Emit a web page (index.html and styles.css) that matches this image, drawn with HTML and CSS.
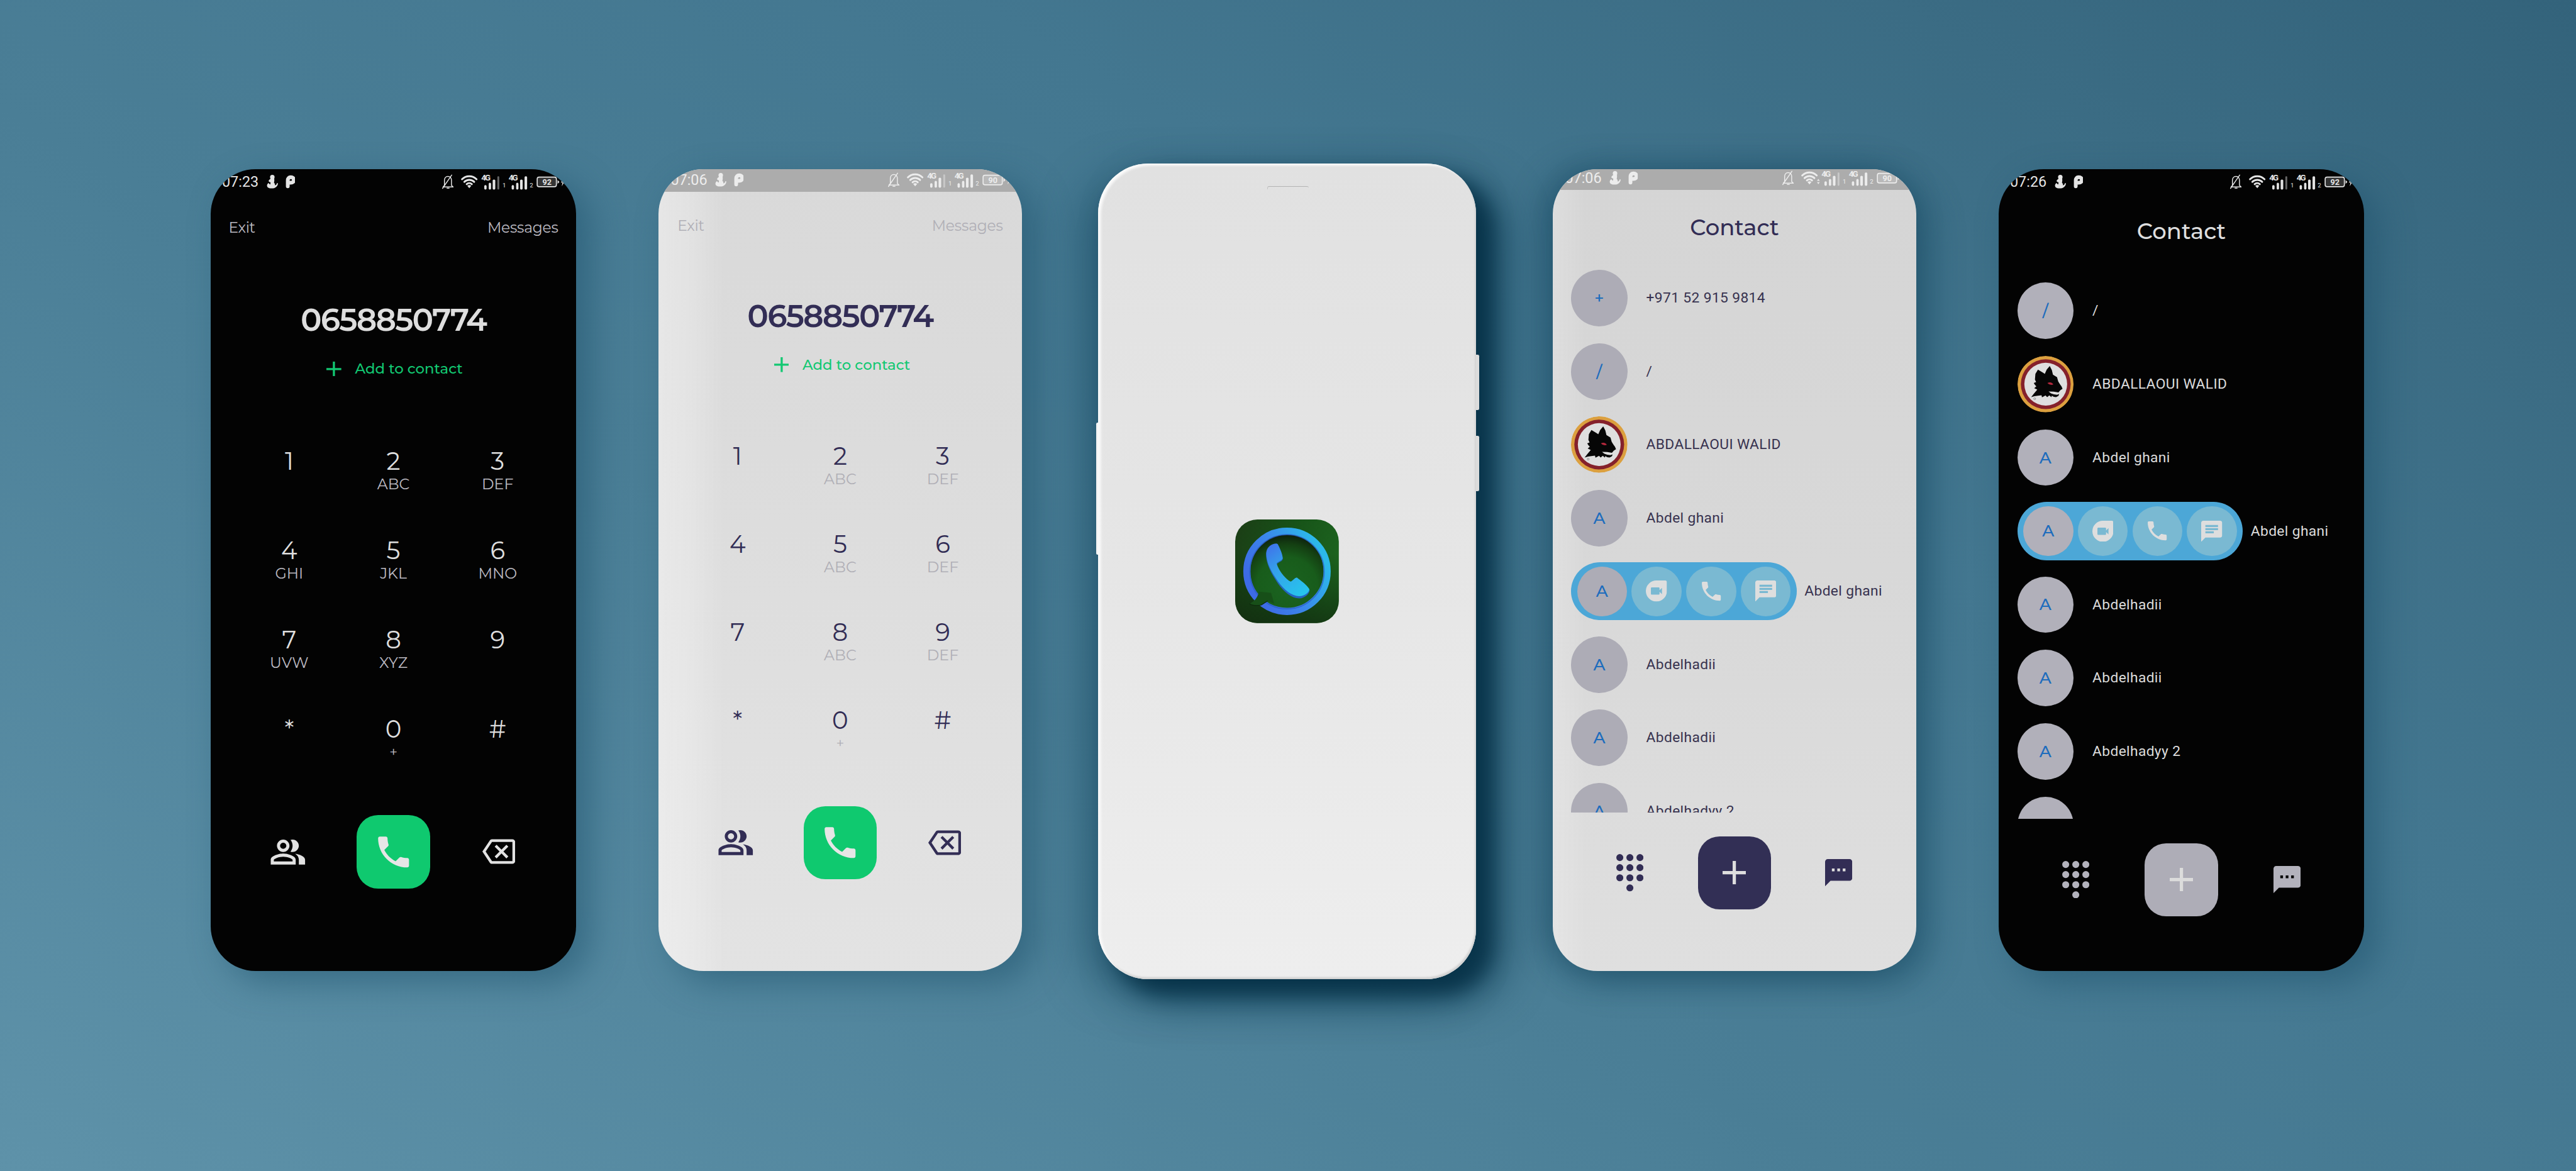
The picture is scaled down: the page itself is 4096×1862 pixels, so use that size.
FILE: index.html
```html
<!DOCTYPE html>
<html lang="en">
<head>
<meta charset="utf-8">
<title>Dialer app – screens</title>
<link rel="stylesheet" href="styles.css">
</head>
<body>
<svg class="defs" aria-hidden="true">
  <symbol id="notif" viewBox="0 0 70 56">
    <circle cx="21.500" cy="17" r="4.800" fill="currentColor"/>
    <path d="M18 20l7.500 0c.5 3 .5 6-.5 8.500 1.500 1.500 2.500 3.500 2.200 6 2.300-.5 4-2.500 4.300-5l2 .8c-.3 5-3.500 9-8.500 10.200-5 1-11 .5-13.500-2-2.500-3-1-7.500 2-9l3 3.500c1-1.500 1.500-3 1-5-3 0-4.500-2-3.500-4 1.200-2 2.500-2.500 4-4z" fill="currentColor"/>
    <path d="M56 37V24.500c0-4.500 2.500-7 6.500-7s6.500 2.300 6.500 6-2.500 6-6.500 6H58" transform="translate(-1.500 -.5)" fill="none" stroke="currentColor" stroke-width="8" stroke-linecap="round"/>
  </symbol>
  <symbol id="signals" viewBox="0 0 290 56">
    <g fill="none" stroke="currentColor" stroke-linecap="round" stroke-linejoin="round">
      <path d="M9 34.500V24c0-5 3-8.500 7.500-8.500S24 19 24 24v10.500l3.500 3.500H6l3-3.500M14.500 40.500h4.500M24.500 12.500 5 41" stroke-width="2"/>
      <path d="M46.500 21.500a22 22 0 0 1 31 0M51.500 27a15 15 0 0 1 21 0M56.500 32a8 8 0 0 1 11 0" stroke-width="4"/>
    </g>
    <path d="M57.800 35.500a6 6 0 0 1 8.400 0L62 40.500z" fill="currentColor"/>
    <g id="cell" fill="currentColor">
      <rect x="94" y="34" width="5" height="9.500" rx="2.500"/>
      <rect x="103.500" y="29" width="5" height="14.500" rx="2.500"/>
      <rect x="112" y="22" width="5.500" height="21.500" rx="2.500"/>
    </g>
    <rect x="122" y="15" width="4" height="28.500" rx="2" fill="currentColor" opacity=".45"/>
    <use href="#cell" x="58.500"/>
    <rect x="180" y="15" width="5.500" height="28.500" rx="2.500" fill="currentColor"/>
    <rect x="207" y="17" width="41" height="20.500" rx="4" fill="currentColor" fill-opacity=".22" stroke="currentColor" stroke-width="2.200"/>
    <path d="M250.500 23l4 4.200-4 4.200zM263 19l-5.500 9.500h3.500l-1.500 8 6-10h-3.500z" fill="currentColor"/>
  </symbol>
  <symbol id="people" viewBox="0 0 24 24">
    <path fill="currentColor" d="M16.670 13.130C18.040 14.060 19 15.320 19 17v3h4v-3c0-2.180-3.570-3.470-6.330-3.870zM15 12c2.210 0 4-1.790 4-4s-1.790-4-4-4c-.47 0-.91.1-1.330.24C14.500 5.270 15 6.580 15 8s-.5 2.730-1.330 3.760c.42.14.86.24 1.330.24zM9 12c2.210 0 4-1.790 4-4s-1.790-4-4-4-4 1.790-4 4 1.790 4 4 4zm0-6c1.100 0 2 .9 2 2s-.9 2-2 2-2-.9-2-2 .9-2 2-2zM9 13c-2.670 0-8 1.340-8 4v3h16v-3c0-2.660-5.330-4-8-4zm6 5H3v-.99C3.200 16.290 6.300 15 9 15s5.800 1.290 6 2v1z"/>
  </symbol>
  <symbol id="phone" viewBox="0 0 24 24">
    <path fill="currentColor" d="M6.620 10.790c1.440 2.830 3.760 5.140 6.590 6.590l2.200-2.200c.27-.27.67-.36 1.020-.24 1.120.37 2.330.57 3.570.57.55 0 1 .45 1 1V20c0 .55-.45 1-1 1-9.390 0-17-7.610-17-17 0-.55.45-1 1-1h3.500c.55 0 1 .45 1 1 0 1.250.2 2.450.57 3.570.11.35.03.74-.25 1.020l-2.200 2.200z"/>
  </symbol>
  <symbol id="backspace" viewBox="0 0 24 24">
    <path fill="currentColor" d="M22 3H7c-.69 0-1.230.35-1.590.88L0 12l5.410 8.110c.36.53.9.89 1.590.89h15c1.100 0 2-.9 2-2V5c0-1.100-.9-2-2-2zm0 16H7.070L2.400 12l4.660-7H22v14zm-11.590-2L14 13.410 17.590 17 19 15.590 15.410 12 19 8.410 17.590 7 14 10.590 10.410 7 9 8.410 12.590 12 9 15.590z"/>
  </symbol>
  <symbol id="dialpad" viewBox="0 0 58 80">
    <g fill="currentColor"><circle cx="7.500" cy="7.500" r="7.500"/><circle cx="29" cy="7.500" r="7.500"/><circle cx="50.500" cy="7.500" r="7.500"/><circle cx="7.500" cy="29" r="7.500"/><circle cx="29" cy="29" r="7.500"/><circle cx="50.500" cy="29" r="7.500"/><circle cx="7.500" cy="50.700" r="7.500"/><circle cx="29" cy="50.700" r="7.500"/><circle cx="50.500" cy="50.700" r="7.500"/><circle cx="29" cy="72.300" r="7.500"/></g>
  </symbol>
  <symbol id="sms" viewBox="2 2 20 20">
    <path fill="currentColor" d="M20 2H4c-1.100 0-2 .9-2 2v18l4-4h14c1.100 0 2-.9 2-2V4c0-1.100-.9-2-2-2zM9 11H7V9h2v2zm4 0h-2V9h2v2zm4 0h-2V9h2v2z"/>
  </symbol>
  <symbol id="chat" viewBox="2 2 20 20">
    <path fill="currentColor" d="M20 2H4c-1.100 0-1.990.9-1.990 2L2 22l4-4h14c1.100 0 2-.9 2-2V4c0-1.100-.9-2-2-2zM6 9h12v2H6V9zm8 5H6v-2h8v2zm4-6H6V6h12v2z"/>
  </symbol>
  <symbol id="duo" viewBox="2 2 20 20">
    <path fill="currentColor" fill-rule="evenodd" d="M12 2h8.500c.8 0 1.500.7 1.500 1.500V12a10 10 0 1 1-10-10zM7.600 8.500c-.4 0-.8.4-.8.800v5.400c0 .4.400.8.800.8h6.600c.4 0 .8-.4.800-.8v-1.900l2.300 2.200V9l-2.300 2.200V9.300c0-.4-.4-.8-.8-.8z"/>
  </symbol>
  <symbol id="plus" viewBox="0 0 50 50">
    <path d="M25 0v50M0 25h50" fill="none" stroke="currentColor" stroke-width="7"/>
  </symbol>
  <symbol id="wolf" viewBox="0 0 120 120">
    <circle cx="60" cy="60" r="60" fill="#dca03f"/>
    <circle cx="60" cy="60" r="53" fill="#85212b"/>
    <circle cx="60" cy="60" r="45.500" fill="#dfdfdf"/>
    <path fill="#060606" d="M43.400 29 54 35.500 58 38 62 29 68.500 21.400 73 30 75.300 39.700 84 45 86.500 54 90 60 93.600 65 95.700 70 91 73 87 77.500 77 76 66 75.500 71 79.500 77 81.500 84 82.500 88.500 81 87 85 82 87.500 77 87 73 84.500 72 87.500 67.500 84 63 87.500 59.500 84 56 86 52 88 51 83.500 43 84.500 36 85.500 29 87.500 35 80 42 71.500 35.500 68.500 40 64.500 37 61.500 34.500 57.600 39.500 55.500 37 50 38 38z"/>
    <path fill="#b4283c" d="M63.500 57.500q7-3.500 11.500 1.500l1 2q-8 2-12.500-3.500z"/>
    <circle cx="36.500" cy="91" r="2" fill="none" stroke="#777" stroke-width="1"/>
  </symbol>
</svg>

<main class="stage">

  <section class="phone dark dialer wide">
    <div class="status">
      <span class="time">07:23</span>
      <svg class="notif"><use href="#notif"/></svg>
      <svg class="signals" viewBox="0 0 290 56"><use href="#signals"/><text class="net" x="87.500" y="24" textLength="20">4G</text><text class="net" x="146" y="24" textLength="20">4G</text><text class="sim" x="133" y="39.500">1</text><text class="sim" x="191" y="39.500">2</text><text class="level" x="228" y="33">92</text></svg>
    </div>
    <header class="topbar"><span>Exit</span><span>Messages</span></header>
    <div class="number">0658850774</div>
    <div class="add"><svg><use href="#plus"/></svg><span>Add to contact</span></div>
    <div class="keypad">
      <div class="key"><b>1</b></div><div class="key"><b>2</b><i>ABC</i></div><div class="key"><b>3</b><i>DEF</i></div>
      <div class="key"><b>4</b><i>GHI</i></div><div class="key"><b>5</b><i>JKL</i></div><div class="key"><b>6</b><i>MNO</i></div>
      <div class="key"><b>7</b><i>UVW</i></div><div class="key"><b>8</b><i>XYZ</i></div><div class="key"><b>9</b></div>
      <div class="key"><b class="star">*</b></div><div class="key"><b>0</b><i class="op">+</i></div><div class="key"><b>#</b></div>
    </div>
    <nav class="actions">
      <span class="slot"><svg class="i-people"><use href="#people"/></svg></span>
      <span class="main call"><svg class="i-phone"><use href="#phone"/></svg></span>
      <span class="slot"><svg class="i-back"><use href="#backspace"/></svg></span>
    </nav>
  </section>

  <section class="phone light dialer">
    <div class="status">
      <span class="time">07:06</span>
      <svg class="notif"><use href="#notif"/></svg>
      <svg class="signals" viewBox="0 0 290 56"><use href="#signals"/><text class="net" x="87.500" y="24" textLength="20">4G</text><text class="net" x="146" y="24" textLength="20">4G</text><text class="sim" x="133" y="39.500">1</text><text class="sim" x="191" y="39.500">2</text><text class="level" x="228" y="33">90</text></svg>
    </div>
    <header class="topbar"><span>Exit</span><span>Messages</span></header>
    <div class="number">0658850774</div>
    <div class="add"><svg><use href="#plus"/></svg><span>Add to contact</span></div>
    <div class="keypad">
      <div class="key"><b>1</b></div><div class="key"><b>2</b><i>ABC</i></div><div class="key"><b>3</b><i>DEF</i></div>
      <div class="key"><b>4</b></div><div class="key"><b>5</b><i>ABC</i></div><div class="key"><b>6</b><i>DEF</i></div>
      <div class="key"><b>7</b></div><div class="key"><b>8</b><i>ABC</i></div><div class="key"><b>9</b><i>DEF</i></div>
      <div class="key"><b class="star">*</b></div><div class="key"><b>0</b><i class="op">+</i></div><div class="key"><b>#</b></div>
    </div>
    <nav class="actions">
      <span class="slot"><svg class="i-people"><use href="#people"/></svg></span>
      <span class="main call"><svg class="i-phone"><use href="#phone"/></svg></span>
      <span class="slot"><svg class="i-back"><use href="#backspace"/></svg></span>
    </nav>
  </section>

  <section class="splash">
    <span class="side left"></span><span class="side r1"></span><span class="side r2"></span><span class="side r3"></span>
    <div class="glass">
      <span class="speaker"></span>
      <svg class="appicon" viewBox="0 0 664 664">
        <defs>
          <linearGradient id="tile" x1="0" y1=".2" x2="1" y2=".5"><stop offset="0" stop-color="#1b3f16"/><stop offset=".5" stop-color="#175318"/><stop offset="1" stop-color="#1d641f"/></linearGradient>
          <linearGradient id="tileshade" x1=".5" y1=".3" x2=".45" y2="1"><stop offset="0" stop-color="#0b2a0c" stop-opacity="0"/><stop offset="1" stop-color="#12280f" stop-opacity=".75"/></linearGradient>
          <linearGradient id="ring" x1=".1" y1=".75" x2=".95" y2=".3"><stop offset="0" stop-color="#3d6be6"/><stop offset=".45" stop-color="#3b86ea"/><stop offset="1" stop-color="#2cb9ea"/></linearGradient>
          <radialGradient id="disc" cx=".5" cy=".72" r=".76"><stop offset="0" stop-color="#1b6320"/><stop offset=".55" stop-color="#185c1b"/><stop offset=".78" stop-color="#143f12"/><stop offset="1" stop-color="#0b140b"/></radialGradient>
          <linearGradient id="handset" x1=".1" y1="0" x2=".75" y2="1"><stop offset="0" stop-color="#3f72ea"/><stop offset=".4" stop-color="#35a0ea"/><stop offset="1" stop-color="#27c4ec"/></linearGradient>
        </defs>
        <rect width="664" height="664" rx="142" fill="url(#tile)"/>
        <rect width="664" height="664" rx="142" fill="url(#tileshade)"/>
        <circle cx="332" cy="332" r="236" fill="url(#disc)"/>
        <circle cx="332" cy="332" r="257" fill="none" stroke="url(#ring)" stroke-width="46"/>
        <circle cx="332" cy="335" r="238" fill="none" stroke="#2b58c4" stroke-width="7" opacity=".7"/>
        <path d="M152 462C146 495 128 522 92 540 110 552 140 553 168 548L208 522 250 540 230 470z" fill="#174f18"/>
        <path d="M92 540C110 552 140 553 168 548L208 522" fill="none" stroke="#0e2a0d" stroke-width="5"/>
        <g transform="translate(-110 -84)">
          <path d="M375 246C345 246 310 268 308 308c0 60 32 120 72 180 40 60 90 100 140 102 40-2 68-34 67-54-17-25-57-55-82-74-15 2-25 22-40 26-35-17-80-77-89-117 9-13 32-15 39-32-3-33-20-68-32-91z" fill="#2564c0"/>
          <path d="M375 238C345 238 310 260 309 300c0 60 32 118 72 176 40 58 90 98 139 100 40-2 66-28 65-46-15-25-55-55-80-74-15 2-25 22-40 26-35-17-80-77-89-117 9-13 32-15 39-32-3-33-20-68-32-91z" fill="url(#handset)"/>
        </g>
      </svg>
    </div>
  </section>

  <section class="phone light contacts">
    <div class="status">
      <span class="time">07:06</span>
      <svg class="notif"><use href="#notif"/></svg>
      <svg class="signals" viewBox="0 0 290 56"><use href="#signals"/><path d="M78 33l3-4 3 4zM78 36l3 4 3-4z" fill="currentColor"/><text class="net" x="87.500" y="24" textLength="20">4G</text><text class="net" x="146" y="24" textLength="20">4G</text><text class="sim" x="133" y="39.500">1</text><text class="sim" x="191" y="39.500">2</text><text class="level" x="228" y="33">90</text></svg>
    </div>
    <h1 class="title">Contact</h1>
    <div class="list">
      <div class="row"><span class="avatar">+</span><span class="name">+971 52 915 9814</span></div>
      <div class="row"><span class="avatar">/</span><span class="name">/</span></div>
      <div class="row"><svg class="avatar"><use href="#wolf"/></svg><span class="name">ABDALLAOUI WALID</span></div>
      <div class="row"><span class="avatar">A</span><span class="name">Abdel ghani</span></div>
      <div class="row open"><div class="pill"><span class="avatar">A</span><span class="act"><svg><use href="#duo"/></svg></span><span class="act"><svg class="tel"><use href="#phone"/></svg></span><span class="act"><svg><use href="#chat"/></svg></span></div><span class="name">Abdel ghani</span></div>
      <div class="row"><span class="avatar">A</span><span class="name">Abdelhadii</span></div>
      <div class="row"><span class="avatar">A</span><span class="name">Abdelhadii</span></div>
      <div class="row"><span class="avatar">A</span><span class="name">Abdelhadyy 2</span></div>
    </div>
    <nav class="actions">
      <span class="slot"><svg class="i-dial"><use href="#dialpad"/></svg></span>
      <span class="main new"><svg class="i-plus"><use href="#plus"/></svg></span>
      <span class="slot"><svg class="i-sms"><use href="#sms"/></svg></span>
    </nav>
  </section>

  <section class="phone dark contacts wide">
    <div class="status">
      <span class="time">07:26</span>
      <svg class="notif"><use href="#notif"/></svg>
      <svg class="signals" viewBox="0 0 290 56"><use href="#signals"/><text class="net" x="87.500" y="24" textLength="20">4G</text><text class="net" x="146" y="24" textLength="20">4G</text><text class="sim" x="133" y="39.500">1</text><text class="sim" x="191" y="39.500">2</text><text class="level" x="228" y="33">92</text></svg>
    </div>
    <h1 class="title">Contact</h1>
    <div class="list">
      <div class="row"><span class="avatar">/</span><span class="name">/</span></div>
      <div class="row"><svg class="avatar"><use href="#wolf"/></svg><span class="name">ABDALLAOUI WALID</span></div>
      <div class="row"><span class="avatar">A</span><span class="name">Abdel ghani</span></div>
      <div class="row open"><div class="pill"><span class="avatar">A</span><span class="act"><svg><use href="#duo"/></svg></span><span class="act"><svg class="tel"><use href="#phone"/></svg></span><span class="act"><svg><use href="#chat"/></svg></span></div><span class="name">Abdel ghani</span></div>
      <div class="row"><span class="avatar">A</span><span class="name">Abdelhadii</span></div>
      <div class="row"><span class="avatar">A</span><span class="name">Abdelhadii</span></div>
      <div class="row"><span class="avatar">A</span><span class="name">Abdelhadyy 2</span></div>
      <div class="row"><span class="avatar"></span></div>
    </div>
    <nav class="actions">
      <span class="slot"><svg class="i-dial"><use href="#dialpad"/></svg></span>
      <span class="main new"><svg class="i-plus"><use href="#plus"/></svg></span>
      <span class="slot"><svg class="i-sms"><use href="#sms"/></svg></span>
    </nav>
  </section>

</main>
</body>
</html>
```
FILE: styles.css
```css
/* The canvas is 55rem wide and 25rem tall. */
html { font-size: calc(100vw / 55); }
* { box-sizing: border-box; }
body { margin: 0; font-family: Montserrat, Inter, sans-serif; }
.defs { position: absolute; width: 0; height: 0; }

.stage {
  width: 55rem;
  height: 100vh;
  overflow: hidden;
  display: flex;
  align-items: flex-start;
  padding: 3.61rem 0 0 4.5rem;
  background: linear-gradient(30deg, #5e92a9 0%, #4a7e96 40%, #437790 65%, #3b6c84 85%, #33637b 100%);
}

/* ---------- phone shell ---------- */
.phone {
  --w: 7.767rem;
  --shift: 0rem;
  flex: none;
  width: var(--w);
  height: 17.12rem;
  border-radius: .96rem;
  overflow: hidden;
  display: flex;
  flex-direction: column;
  box-shadow: .3rem .25rem .7rem rgba(28, 80, 106, .5);
}
.phone.wide { --w: 7.8rem; }
.phone:nth-child(2) { margin-left: 1.755rem; }
.phone:nth-child(4) { margin-left: 1.637rem; box-shadow: .3rem .25rem .7rem rgba(20, 70, 96, .45), -.2rem 0 .7rem rgba(10, 58, 82, .45); }
.phone:nth-child(5) { margin-left: 1.76rem; }

.dark { background: #030303; color: #dedede; --muted: #bcbac2; --name: #dcdcdc; --status: #e4e4e4; }
.light { color: #322d55; --muted: #b0afb6; --name: #37324f; --status: #ececec; }
.light.dialer { background: linear-gradient(90deg, rgba(255,255,255,.34), rgba(255,255,255,.22) 9%, rgba(255,255,255,0) 18%), linear-gradient(#d9d9d9, #dcdcdc 35%, #e3e3e3); }
.light.contacts { background: linear-gradient(90deg, rgba(255,255,255,.2), rgba(255,255,255,0) 9%), linear-gradient(#d5d5d5, #d8d8d8 50%, #dfdfdf); }

/* ---------- status bar ---------- */
.status {
  flex: none;
  height: .49rem;
  display: flex;
  align-items: flex-start;
  padding-left: .24rem;
  color: var(--status);
}
.light .status { background: #acacac; padding-left: .265rem; }
.contacts .status { height: .45rem; }
.status > * { margin-top: var(--shift); flex: none; }
.time { font: 400 .314rem/.56rem Roboto, sans-serif; width: .86rem; }
.notif { width: .7rem; height: .56rem; }
.signals { width: 2.9rem; height: .56rem; margin-left: auto; }
.net, .sim, .level { fill: currentColor; font-family: Roboto, sans-serif; }
.net { font-size: 18px; font-weight: 700; }
.sim { font-size: 13px; }
.level { font-size: 17px; font-weight: 700; text-anchor: middle; }
.light.dialer { --shift: -.035rem; }
.light.contacts { --shift: -.075rem; }

/* ---------- dialer ---------- */
.topbar {
  display: flex;
  justify-content: space-between;
  margin-top: .56rem;
  padding: 0 .38rem;
  font-size: .314rem;
  line-height: .4rem;
  letter-spacing: -.003rem;
  color: var(--muted);
}
.light .topbar { margin-top: .52rem; padding: 0 .41rem; }
.number {
  margin-top: 1.37rem;
  text-align: center;
  font-size: .672rem;
  font-weight: 600;
  line-height: .8rem;
  letter-spacing: -.025rem;
}
.light .number { margin-top: 1.335rem; }
.add {
  margin-top: .445rem;
  height: .4rem;
  display: flex;
  align-items: center;
  padding-left: 2.47rem;
  gap: .29rem;
  color: #12c872;
  font-size: .306rem;
  font-weight: 500;
}
.light .add { margin-top: .435rem; }
.add svg { width: .32rem; height: .32rem; }
.keypad {
  --pitch: 1.906rem;
  margin: 1.49rem auto 0;
  display: grid;
  grid-template-columns: repeat(3, 2.225rem);
  grid-auto-rows: var(--pitch);
}
.light .keypad { --pitch: 1.88rem; margin-top: 1.464rem; grid-template-columns: repeat(3, 2.19rem); }
.key { display: flex; flex-direction: column; align-items: center; }
.key b { font-size: .52rem; font-weight: 400; line-height: .6rem; }
.key i { font-style: normal; font-size: .318rem; line-height: .35rem; color: var(--muted); }
.key i.op { font-size: .3rem; line-height: .35rem; }

/* ---------- bottom actions ---------- */
.actions {
  margin-top: .22rem;
  display: flex;
  justify-content: center;
  align-items: center;
}
.light.dialer .actions { margin-top: .236rem; }
.contacts .actions { margin-top: .514rem; }
.slot { width: 1.46rem; display: flex; justify-content: center; }
.main {
  width: 1.56rem;
  height: 1.56rem;
  margin: 0 .72rem;
  border-radius: .46rem;
  display: flex;
  align-items: center;
  justify-content: center;
}
.dark .main { margin: 0 .74rem; }
.call { background: #0fc96f; color: #e6e6e6; }
.light .new { background: #322f55; color: #dedede; }
.dark .new { background: #aeadb7; color: #dcdcdc; }
.dark .slot { color: #e2e2e2; }
.dark.contacts .slot { color: #b3b2bc; }
.i-people { width: .8rem; height: .8rem; }
.i-phone { width: .88rem; height: .88rem; }
.i-back { width: .7rem; height: .7rem; }
.i-dial { width: .58rem; height: .8rem; }
.i-plus { width: .5rem; height: .5rem; }
.i-sms { width: .58rem; height: .58rem; }

/* ---------- contacts ---------- */
.title {
  margin: .5rem 0 0;
  text-align: center;
  font-size: .476rem;
  font-weight: 500;
  line-height: .6rem;
}
.dark .title { margin-top: .58rem; }
.list {
  --pitch: 1.564rem;
  flex: none;
  margin-top: .428rem;
  height: 11.756rem;
  overflow: hidden;
}
.dark .list { --pitch: 1.57rem; margin-top: .605rem; height: 11.642rem; }
.row {
  height: var(--pitch);
  display: flex;
  align-items: center;
  gap: .4rem;
  padding-left: .395rem;
}
.name {
  font: 400 .306rem/.4rem Roboto, sans-serif;
  letter-spacing: .005rem;
  color: var(--name);
  white-space: nowrap;
}
.avatar {
  flex: none;
  width: 1.205rem;
  height: 1.205rem;
  border-radius: 50%;
  background: #adacb6;
  color: #1d6cbd;
  display: flex;
  align-items: center;
  justify-content: center;
  font-size: .35rem;
  font-weight: 500;
}
.dark .avatar { background: #b1b0ba; }
svg.avatar, .dark svg.avatar { background: none; }
.open { gap: .165rem; }
.pill {
  flex: none;
  width: 4.82rem;
  height: 1.24rem;
  border-radius: .62rem;
  background: #4ca7d7;
  display: flex;
  align-items: center;
  gap: .1rem;
  padding-left: .13rem;
}
.pill .avatar, .act { width: 1.065rem; height: 1.065rem; flex: none; border-radius: 50%; }
.act { display: flex; align-items: center; justify-content: center; background: #7ab9d2; color: #dedede; }
.act svg { width: .45rem; height: .45rem; }
.act svg.tel { width: .54rem; height: .54rem; }

/* ---------- centre handset ---------- */
.splash {
  position: relative;
  flex: none;
  width: 8.065rem;
  height: 17.42rem;
  margin: -.12rem 0 0 1.625rem;
  border-radius: 1.07rem;
  box-shadow:
    .35rem .3rem .4rem rgba(3, 44, 66, .75),
    .6rem .45rem .9rem rgba(3, 50, 74, .6),
    -.3rem .3rem .9rem rgba(16, 66, 90, .5);
}
.glass {
  position: relative;
  height: 100%;
  border-radius: inherit;
  display: flex;
  align-items: center;
  justify-content: center;
  background: linear-gradient(#e1e1e1, #e6e6e6 50%, #eee);
  box-shadow: inset .06rem .04rem .05rem #fafafa, inset -.02rem -.04rem .04rem #cfcfcf;
}
.speaker {
  position: absolute;
  top: .485rem;
  left: 3.61rem;
  width: .89rem;
  height: .07rem;
  border-top: .015rem solid #b4b4b4;
  border-left: .015rem solid #c4c4c4;
  border-radius: .04rem .04rem 0 0;
}
.appicon { width: 2.213rem; height: 2.213rem; }
.side { position: absolute; background: #dcdcdc; border-radius: .03rem; }
.left { left: -.04rem; top: 5.53rem; width: .1rem; height: 2.82rem; background: #f4f4f4; }
.r1 { right: -.01rem; top: 2.28rem; width: .1rem; height: .57rem; }
.r2 { right: -.07rem; top: 4.08rem; width: .14rem; height: 1.18rem; }
.r3 { right: -.07rem; top: 5.82rem; width: .14rem; height: 1.18rem; }
```
